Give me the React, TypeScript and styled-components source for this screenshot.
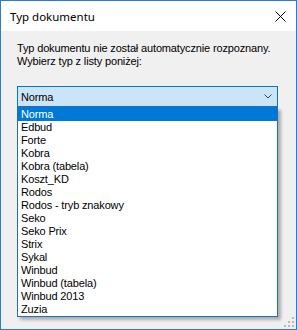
import React from 'react';
import styled, { createGlobalStyle } from 'styled-components';

const GlobalStyle = createGlobalStyle`
    html, body {
        margin: 0;
        padding: 0;
        background: #ffffff;
    }
`;

const ITEMS = [
    'Norma',
    'Edbud',
    'Forte',
    'Kobra',
    'Kobra (tabela)',
    'Koszt_KD',
    'Rodos',
    'Rodos - tryb znakowy',
    'Seko',
    'Seko Prix',
    'Strix',
    'Sykal',
    'Winbud',
    'Winbud (tabela)',
    'Winbud 2013',
    'Zuzia',
];

const Window = styled.div`
    width: 297px;
    height: 330px;
    box-sizing: border-box;
    border: 1px solid #2b7bd6;
    display: flex;
    flex-direction: column;
    background: #f0f0f0;
    position: relative;
`;

const TitleBar = styled.div`
    height: 30px;
    flex: none;
    background: #ffffff;
    display: flex;
    align-items: center;
    justify-content: space-between;
    padding: 0 10px 0 9px;
`;

const Title = styled.span`
    font-family: 'Noto Sans', 'Liberation Sans', sans-serif;
    font-size: 11.5px;
    color: #000000;
    margin-top: 1px;
`;

const CloseButton = styled.div`
    width: 12px;
    height: 12px;
    display: flex;
    align-items: center;
    justify-content: center;
`;

const Body = styled.div`
    flex: 1;
    padding: 11px 18px 0 16px;
    font-family: 'Liberation Sans', Arial, sans-serif;
    font-size: 11px;
    letter-spacing: -0.15px;
    color: #000000;
`;

const Message = styled.p`
    margin: 0;
    line-height: 13px;
`;

const ComboWrap = styled.div`
    position: relative;
    margin-top: 18px;
    width: 261px;
`;

const Combo = styled.div`
    height: 21px;
    box-sizing: border-box;
    border: 1px solid #0078d7;
    background: #cce4f7;
    display: flex;
    align-items: center;
    justify-content: space-between;
    padding: 0 5px 0 3px;
`;

const List = styled.ul`
    position: absolute;
    top: 100%;
    left: 0;
    width: 261px;
    box-sizing: border-box;
    margin: 0;
    padding: 0;
    list-style: none;
    background: #ffffff;
    border: 1px solid #1d6fc0;
    box-shadow: 3px 3px 3px rgba(0, 0, 0, 0.28);
`;

const Item = styled.li<{ $selected?: boolean }>`
    height: 13px;
    line-height: 13px;
    padding-left: 3px;
    white-space: nowrap;
    background: ${p => (p.$selected ? '#0078d7' : 'transparent')};
    color: ${p => (p.$selected ? '#ffffff' : '#000000')};
`;

const Grip = styled.svg`
    position: absolute;
    right: 2px;
    bottom: 2px;
`;

export default function App() {
    return (
        <>
            <GlobalStyle />
            <Window>
                <TitleBar>
                    <Title>Typ dokumentu</Title>
                    <CloseButton>
                        <svg width="11" height="11" viewBox="0 0 11 11">
                            <path d="M0.5 0.5 L10.5 10.5 M10.5 0.5 L0.5 10.5" stroke="#000" strokeWidth="1" />
                        </svg>
                    </CloseButton>
                </TitleBar>
                <Body>
                    <Message>
                        Typ dokumentu nie został automatycznie rozpoznany.
                        <br />
                        Wybierz typ z listy poniżej:
                    </Message>
                    <ComboWrap>
                        <Combo>
                            <span>Norma</span>
                            <svg width="8" height="5" viewBox="0 0 8 5">
                                <path d="M0.5 0.5 L4 4 L7.5 0.5" stroke="#444" strokeWidth="1" fill="none" />
                            </svg>
                        </Combo>
                        <List>
                            {ITEMS.map((item, i) => (
                                <Item key={item} $selected={i === 0}>
                                    {item}
                                </Item>
                            ))}
                        </List>
                    </ComboWrap>
                </Body>
                <Grip width="10" height="10" viewBox="0 0 10 10">
                    {[
                        [8, 0],
                        [8, 4],
                        [8, 8],
                        [4, 4],
                        [4, 8],
                        [0, 8],
                    ].map(([x, y]) => (
                        <rect key={`${x}-${y}`} x={x} y={y} width="2" height="2" fill="#b8b8b8" />
                    ))}
                </Grip>
            </Window>
        </>
    );
}
